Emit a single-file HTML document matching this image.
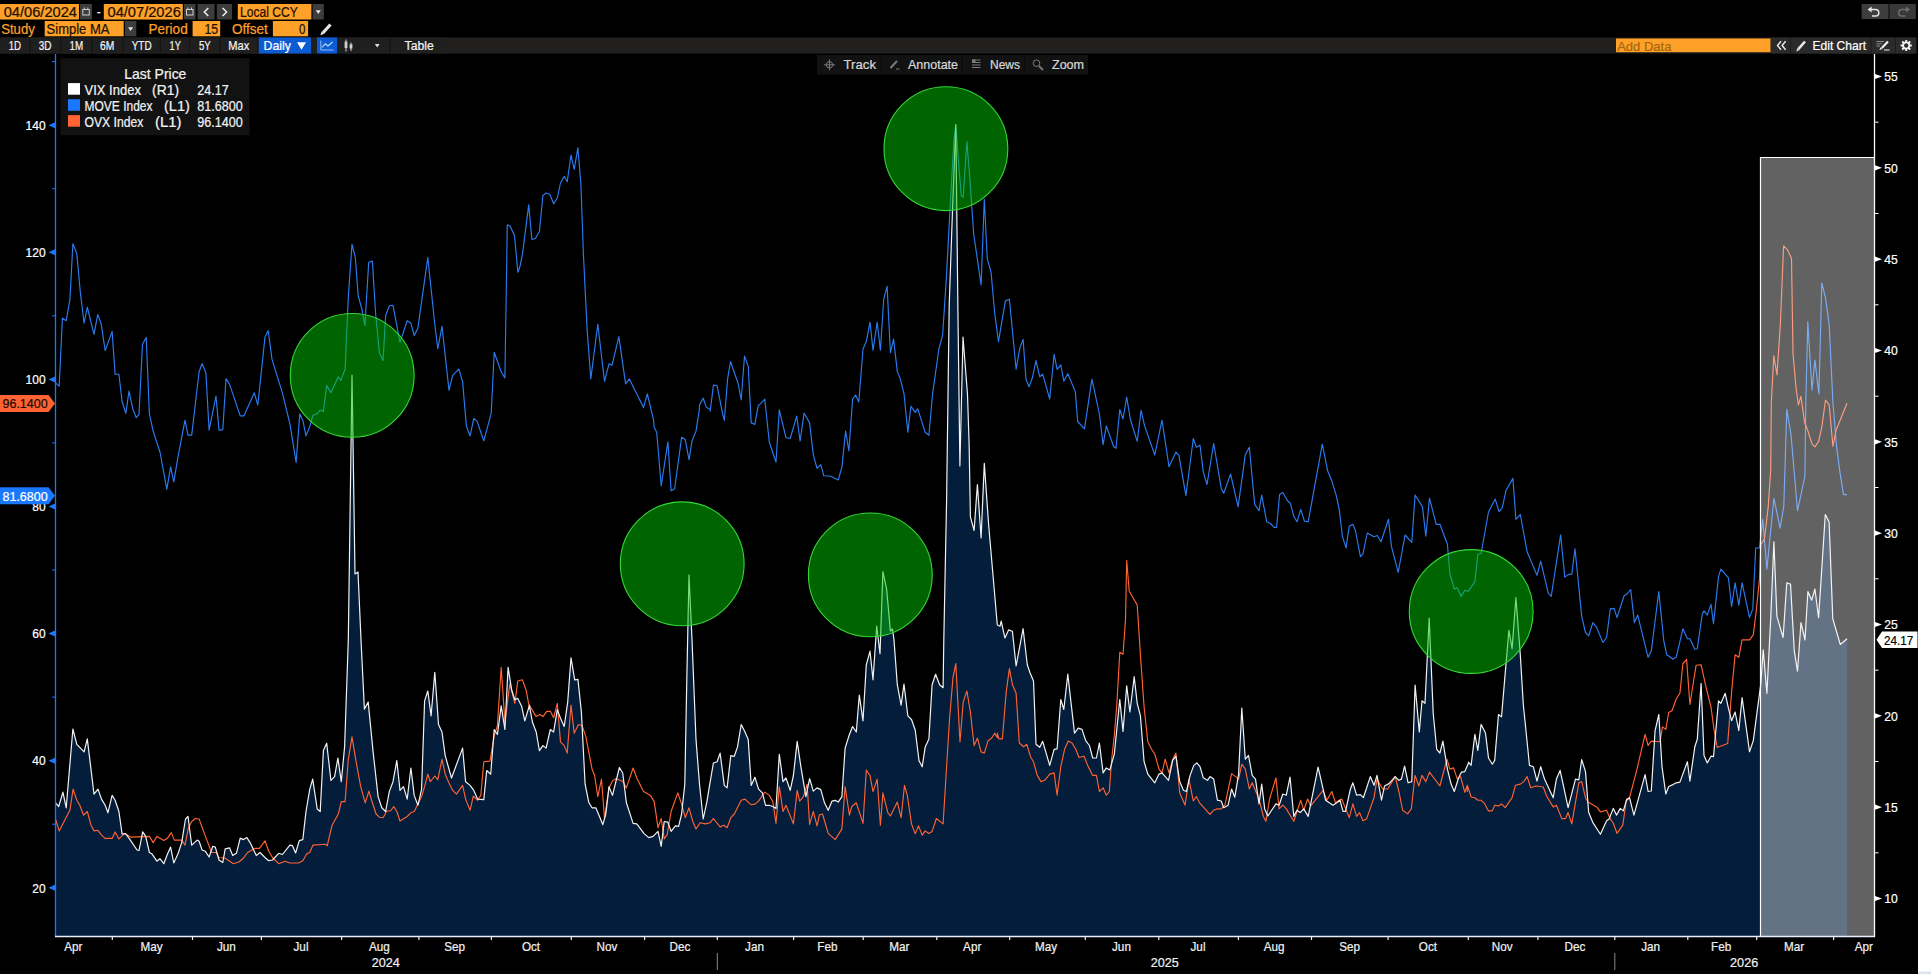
<!DOCTYPE html>
<html lang="en"><head><meta charset="utf-8"><title>Volatility Indices Chart</title>
<style>html,body{margin:0;padding:0;background:#000;}body{width:1931px;height:974px;overflow:hidden;position:relative}</style></head>
<body>
<svg width="1931" height="974" viewBox="0 0 1931 974" font-family="Liberation Sans, Arial, sans-serif" style="position:absolute;left:0;top:0;display:block">
<rect x="0.0" y="0.0" width="1931.0" height="974.0" fill="#000" />
<rect x="1918.0" y="0.0" width="13.0" height="974.0" fill="#fff" />
<rect x="1918.0" y="971.5" width="13.0" height="2.5" fill="#dde3ee" />
<path d="M55.5,802.8 L58.7,806.5 L62.9,792.1 L66.2,807.8 L72.9,729.0 L76.8,744.4 L84.1,751.9 L87.3,738.9 L94.0,794.1 L98.0,789.1 L101.5,799.1 L105.2,805.3 L107.9,812.8 L112.1,795.4 L115.1,800.3 L118.9,811.5 L122.1,833.9 L125.8,833.9 L129.5,838.9 L137.0,850.0 L139.0,850.5 L142.7,831.9 L145.7,836.4 L149.4,852.5 L151.9,853.8 L156.9,861.2 L159.9,858.7 L163.8,863.7 L167.6,853.8 L170.6,847.1 L173.8,863.0 L178.0,853.8 L181.7,842.6 L185.5,819.0 L188.0,816.5 L191.7,845.1 L197.2,840.1 L199.1,841.3 L202.1,850.0 L205.4,851.3 L209.1,857.0 L212.8,846.3 L215.3,847.1 L219.0,860.0 L222.8,862.5 L225.2,848.8 L229.5,847.8 L232.7,855.5 L236.4,853.3 L240.2,838.1 L243.4,839.6 L246.9,837.6 L250.1,842.6 L256.3,855.5 L260.0,852.5 L265.0,857.5 L268.7,860.7 L272.5,860.0 L278.7,853.3 L282.4,854.5 L289.9,845.1 L292.4,845.6 L295.6,853.0 L299.3,840.6 L302.8,839.6 L306.0,811.5 L309.8,789.1 L312.7,779.2 L317.2,809.0 L320.2,811.5 L323.4,750.6 L326.7,743.2 L330.9,780.4 L334.6,776.7 L337.9,758.1 L341.3,781.7 L344.6,746.9 L348.3,640.0 L352.0,375.0 L355.0,574.0 L358.0,572.0 L361.0,640.0 L364.4,709.1 L368.2,702.1 L373.1,751.9 L378.1,796.6 L381.8,807.8 L385.6,811.5 L389.3,791.6 L393.0,781.7 L396.8,760.6 L400.0,790.4 L403.5,786.7 L407.2,799.1 L410.9,768.0 L414.2,795.4 L417.9,805.3 L421.6,789.1 L424.6,700.9 L427.8,691.0 L431.1,715.8 L434.8,672.3 L438.5,724.5 L442.0,732.0 L445.2,755.6 L451.5,778.0 L462.6,748.1 L465.6,781.7 L470.1,785.4 L473.8,790.4 L477.6,799.1 L483.8,799.6 L486.7,770.5 L490.7,774.2 L494.2,729.5 L497.4,734.5 L501.2,705.9 L504.9,729.5 L508.1,667.3 L511.6,689.7 L514.8,699.7 L517.8,698.4 L521.5,705.9 L524.8,720.8 L529.3,705.9 L529.3,705.1 L532.4,722.0 L536.2,732.0 L539.4,750.6 L542.9,745.6 L546.1,748.1 L550.3,729.5 L553.6,732.0 L557.3,709.6 L560.5,718.3 L564.2,726.5 L567.7,702.1 L571.0,657.9 L574.7,679.8 L577.9,679.3 L581.4,712.1 L585.1,784.2 L588.9,802.8 L592.1,807.8 L595.8,807.8 L599.5,816.5 L602.8,824.7 L605.8,814.0 L609.0,786.7 L612.5,795.4 L619.4,767.5 L622.7,773.0 L626.4,802.8 L633.1,823.4 L636.8,823.9 L644.3,833.9 L648.8,837.6 L653.0,836.4 L658.0,831.4 L661.2,846.3 L664.2,821.5 L667.9,822.2 L671.1,831.4 L675.4,825.9 L678.6,826.4 L681.6,814.0 L684.8,784.2 L687.0,669.8 L689.0,575.0 L692.0,640.0 L696.0,739.4 L699.5,784.2 L703.2,819.0 L706.9,801.6 L710.2,781.7 L713.4,763.0 L717.1,761.8 L720.1,753.1 L724.3,785.4 L727.1,787.9 L730.8,755.6 L734.3,756.3 L737.5,746.9 L741.2,724.5 L745.0,732.0 L748.2,739.4 L751.2,785.4 L754.9,777.2 L758.6,789.1 L762.4,792.9 L765.6,805.3 L769.3,805.3 L772.8,806.5 L776.0,808.5 L779.3,754.3 L783.0,781.7 L786.0,778.0 L790.2,790.4 L793.4,775.5 L797.2,741.4 L800.9,766.8 L805.9,796.6 L809.6,778.7 L813.3,791.1 L817.0,787.9 L820.8,789.6 L824.5,802.8 L828.2,810.3 L832.0,801.1 L835.2,800.3 L838.2,802.1 L841.9,796.6 L845.1,748.1 L849.4,734.5 L852.6,726.5 L856.3,732.0 L859.3,695.2 L863.0,720.8 L866.3,664.9 L870.0,651.2 L873.0,679.8 L876.7,626.0 L880.0,653.7 L882.9,571.5 L886.6,589.0 L890.4,631.0 L892.5,629.0 L894.0,640.0 L897.3,684.7 L901.1,705.1 L904.0,684.2 L907.8,715.8 L911.5,719.5 L915.2,730.0 L919.0,760.6 L922.2,766.8 L925.2,746.9 L928.9,738.9 L932.1,684.7 L935.6,674.3 L939.6,684.7 L943.1,687.7 L943.8,640.0 L946.6,500.0 L949.2,305.0 L952.5,210.0 L955.8,124.8 L957.0,230.0 L957.9,310.0 L959.9,466.0 L963.0,337.0 L967.5,394.5 L969.1,443.7 L970.4,516.8 L974.1,530.5 L977.4,484.5 L981.1,538.0 L984.3,463.4 L988.6,524.3 L997.3,625.0 L1000.0,626.2 L1001.2,621.2 L1004.9,637.9 L1008.6,629.9 L1012.4,631.2 L1016.1,666.0 L1023.1,628.7 L1027.3,664.7 L1029.8,672.2 L1033.5,680.9 L1036.0,744.3 L1039.7,747.3 L1042.7,741.3 L1049.7,765.4 L1054.1,749.3 L1057.1,748.8 L1060.8,699.5 L1063.8,709.5 L1067.8,674.2 L1074.5,733.1 L1078.2,728.1 L1082.0,729.4 L1085.7,740.6 L1089.4,745.5 L1092.7,758.0 L1096.4,758.0 L1099.4,743.0 L1103.1,772.9 L1106.3,767.9 L1109.8,769.9 L1114.3,754.2 L1119.8,699.5 L1123.0,731.4 L1126.7,685.9 L1129.9,712.0 L1134.2,676.7 L1137.2,703.3 L1140.4,715.7 L1144.1,761.7 L1147.8,774.1 L1154.8,782.8 L1159.0,774.1 L1162.0,772.9 L1168.5,780.3 L1172.7,760.4 L1175.9,756.2 L1179.7,781.6 L1183.4,790.3 L1186.4,791.5 L1190.1,775.4 L1193.8,765.4 L1196.8,762.9 L1200.0,766.7 L1203.3,777.8 L1207.5,780.3 L1210.0,776.6 L1213.7,779.1 L1217.4,800.2 L1221.2,801.0 L1223.7,807.7 L1228.1,805.2 L1231.6,789.0 L1234.8,797.2 L1238.6,774.1 L1241.8,708.2 L1245.3,759.2 L1248.5,755.5 L1252.2,775.4 L1255.5,779.1 L1259.0,803.9 L1261.7,784.1 L1264.7,808.9 L1267.9,815.9 L1275.9,803.9 L1279.1,805.2 L1282.8,794.0 L1286.3,795.2 L1290.0,777.1 L1293.8,816.4 L1297.0,810.2 L1300.2,812.6 L1303.7,808.9 L1308.2,816.4 L1318.1,767.2 L1325.6,800.2 L1333.0,805.2 L1336.8,802.7 L1340.0,800.2 L1343.0,811.4 L1345.5,811.4 L1350.4,789.0 L1352.9,782.8 L1356.6,795.2 L1360.4,794.7 L1363.4,797.7 L1370.3,776.6 L1374.0,785.3 L1377.0,775.4 L1381.5,800.2 L1384.5,786.0 L1389.0,783.6 L1395.2,776.6 L1398.9,780.3 L1401.4,779.1 L1404.6,766.2 L1408.1,782.8 L1411.8,781.6 L1415.1,685.1 L1419.3,731.9 L1422.0,700.8 L1425.0,703.3 L1429.2,618.2 L1433.2,713.2 L1436.7,749.3 L1439.9,753.0 L1442.9,741.1 L1447.4,769.1 L1451.1,784.1 L1454.3,791.5 L1458.6,777.8 L1461.5,772.1 L1464.8,771.6 L1468.5,762.9 L1468.5,762.2 L1471.1,765.4 L1474.9,734.3 L1477.8,750.5 L1481.1,724.4 L1485.5,733.1 L1488.5,758.0 L1492.3,764.2 L1494.7,760.4 L1498.5,714.5 L1501.5,716.9 L1505.2,673.4 L1508.9,630.4 L1512.1,648.6 L1515.9,597.7 L1520.3,654.8 L1523.3,704.5 L1529.5,765.4 L1533.3,766.7 L1537.0,781.1 L1540.7,766.7 L1544.5,779.1 L1553.2,797.7 L1556.4,779.1 L1560.1,770.4 L1563.1,784.1 L1568.1,807.7 L1575.5,779.1 L1578.8,779.8 L1581.7,759.7 L1585.5,771.6 L1588.7,812.6 L1592.9,822.6 L1600.4,834.3 L1606.6,820.8 L1609.1,818.9 L1613.3,808.4 L1616.5,815.1 L1620.3,808.4 L1623.3,810.9 L1626.5,800.2 L1629.5,797.7 L1633.9,815.1 L1645.1,774.6 L1648.1,791.5 L1651.3,791.0 L1655.1,730.6 L1658.8,714.5 L1662.0,766.7 L1665.8,794.0 L1668.7,786.5 L1673.0,784.6 L1676.2,782.8 L1679.9,782.1 L1687.4,761.7 L1689.9,781.1 L1694.8,746.8 L1697.3,739.3 L1701.1,683.4 L1704.0,755.5 L1707.3,762.9 L1711.0,756.2 L1713.5,756.7 L1718.5,700.8 L1720.9,703.3 L1725.2,693.3 L1728.4,708.2 L1731.6,720.7 L1735.1,712.0 L1738.8,730.6 L1742.1,697.6 L1749.5,751.7 L1753.3,740.6 L1760.7,684.6 L1763.2,649.8 L1766.9,693.3 L1770.7,618.9 L1773.9,541.8 L1776.9,616.4 L1783.1,637.5 L1786.8,582.8 L1790.5,584.1 L1794.3,651.2 L1797.5,671.1 L1801.0,622.6 L1805.0,640.0 L1807.9,591.5 L1811.7,600.2 L1814.9,589.0 L1818.6,617.6 L1825.3,514.5 L1829.1,521.9 L1832.8,618.9 L1840.3,644.5 L1847.0,638.7 L1847.0,936 L55.5,936 Z" fill="#031d3b"/>
<path d="M55.5,382.9 L59.2,386.1 L62.4,318.2 L66.2,320.7 L69.9,299.6 L72.9,243.7 L76.8,253.6 L80.3,292.1 L84.1,323.2 L87.3,307.1 L94.0,334.4 L97.7,314.5 L101.0,323.2 L105.2,350.6 L112.1,331.4 L115.1,374.2 L118.9,374.2 L122.1,401.5 L125.8,413.4 L129.0,391.1 L132.8,409.0 L136.3,417.7 L139.0,414.4 L142.5,344.3 L146.2,337.4 L149.4,413.9 L153.2,431.3 L160.1,452.5 L166.8,489.3 L170.6,466.9 L173.8,481.8 L178.0,456.9 L185.0,420.2 L188.0,435.1 L191.7,435.1 L199.1,371.7 L202.1,363.5 L205.9,372.9 L209.1,430.1 L216.0,396.0 L219.0,430.1 L222.8,429.6 L226.0,378.6 L229.5,384.1 L240.2,415.9 L243.9,415.9 L254.3,392.8 L257.8,405.2 L265.0,336.9 L268.2,330.7 L272.0,359.3 L282.4,392.8 L289.9,423.9 L296.1,462.4 L299.8,413.9 L302.8,420.2 L306.0,435.8 L309.8,426.4 L313.0,415.2 L317.2,413.9 L320.2,410.2 L323.4,411.5 L326.7,385.4 L330.9,392.8 L338.3,376.7 L340.8,380.4 L345.1,369.2 L348.3,297.1 L352.0,244.4 L355.3,257.3 L358.2,295.9 L362.0,309.5 L364.9,325.7 L368.7,262.3 L372.4,261.1 L375.6,313.3 L379.4,353.0 L383.1,360.5 L385.6,315.8 L389.3,305.8 L393.0,305.3 L400.0,342.4 L407.2,320.7 L410.9,323.2 L414.2,335.6 L417.9,328.2 L427.8,257.3 L434.8,324.5 L437.8,348.6 L442.0,326.4 L449.0,390.3 L452.7,375.4 L458.9,369.2 L462.6,381.6 L466.4,426.4 L470.1,435.8 L473.8,418.4 L477.1,421.4 L483.8,440.8 L491.2,413.4 L494.2,352.3 L501.2,371.7 L504.9,377.9 L507.3,224.8 L510.2,226.3 L514.5,235.7 L517.9,272.2 L520.0,266.3 L522.5,253.9 L528.7,204.9 L531.9,239.5 L535.4,238.5 L539.4,231.5 L542.9,195.5 L546.1,193.0 L549.8,194.2 L553.6,203.7 L557.3,198.0 L560.5,183.0 L564.2,176.3 L567.2,181.8 L571.0,155.0 L574.2,169.4 L577.9,147.7 L580.9,184.3 L583.4,253.9 L587.1,329.1 L590.8,378.9 L597.8,324.2 L604.5,381.3 L609.0,363.9 L612.0,365.2 L618.9,336.6 L625.6,383.8 L629.4,378.9 L643.5,407.4 L647.3,393.8 L653.5,419.9 L654.2,427.3 L656.7,432.3 L661.2,485.8 L667.9,441.8 L671.1,490.7 L674.6,489.0 L681.6,437.3 L685.3,439.8 L689.0,459.7 L692.0,441.0 L696.0,431.1 L699.5,408.7 L699.5,405.0 L703.2,398.2 L706.4,407.4 L710.2,409.2 L710.2,411.2 L713.4,385.1 L717.1,385.8 L722.6,413.7 L724.3,420.4 L727.6,378.9 L730.5,361.5 L738.2,383.8 L741.2,400.0 L744.5,356.0 L748.2,366.4 L751.2,422.9 L754.9,424.4 L758.1,406.2 L764.8,399.2 L769.3,442.3 L776.0,462.1 L779.3,409.9 L786.0,437.8 L790.2,438.5 L796.7,416.1 L800.1,441.0 L804.1,413.2 L809.6,422.9 L813.3,454.7 L817.0,468.4 L820.8,464.6 L823.8,475.8 L830.7,476.3 L838.2,480.0 L841.9,467.1 L845.6,431.1 L848.9,451.0 L852.6,399.2 L855.6,395.0 L858.8,402.0 L863.0,349.0 L866.3,341.6 L870.0,322.2 L873.0,350.3 L877.2,322.2 L880.4,350.3 L883.7,299.3 L887.1,286.4 L890.4,352.8 L893.6,339.1 L897.3,371.4 L900.3,378.9 L904.0,393.8 L907.8,432.3 L911.0,406.2 L915.2,412.4 L917.7,408.7 L925.2,432.3 L928.9,435.3 L932.6,393.8 L938.9,349.0 L942.6,335.4 L946.3,279.4 L950.0,209.1 L953.8,142.0 L955.8,124.6 L958.7,164.4 L961.2,195.5 L963.2,197.2 L966.9,141.5 L969.9,179.3 L973.7,234.0 L981.1,285.0 L984.3,199.2 L987.3,258.9 L991.1,272.5 L994.8,314.2 L998.5,341.6 L998.5,341.4 L1005.4,300.9 L1009.4,299.2 L1016.1,369.3 L1019.8,348.1 L1023.1,339.4 L1026.0,379.2 L1029.0,386.7 L1032.3,378.0 L1036.0,360.6 L1039.7,376.7 L1042.7,374.2 L1049.7,399.1 L1054.1,354.3 L1057.1,369.3 L1060.8,365.0 L1063.8,381.2 L1067.8,373.7 L1075.3,391.6 L1077.7,421.5 L1084.5,428.9 L1091.9,379.2 L1099.4,414.0 L1103.1,444.6 L1106.3,425.9 L1113.5,446.3 L1116.0,448.3 L1119.8,409.5 L1123.0,419.0 L1126.7,397.1 L1130.4,419.5 L1137.2,441.3 L1141.1,410.3 L1144.6,425.9 L1154.8,455.0 L1162.0,420.2 L1169.0,466.7 L1175.9,452.2 L1178.9,455.2 L1185.9,495.7 L1193.3,438.5 L1196.3,447.2 L1200.0,445.2 L1203.3,472.1 L1207.0,484.5 L1213.7,443.5 L1221.2,488.2 L1223.7,493.2 L1230.6,474.1 L1238.1,506.9 L1245.3,454.7 L1249.3,447.2 L1254.7,504.4 L1259.0,510.6 L1261.7,495.0 L1266.7,521.8 L1270.4,523.5 L1274.1,527.3 L1276.6,527.3 L1279.6,494.5 L1282.8,492.5 L1287.5,500.7 L1290.3,503.2 L1293.8,516.3 L1297.0,521.8 L1300.7,509.4 L1304.4,521.1 L1308.2,521.8 L1322.3,444.2 L1327.6,470.8 L1331.8,480.8 L1336.3,495.7 L1339.2,509.4 L1342.5,536.7 L1346.0,547.9 L1349.2,526.3 L1352.9,524.3 L1355.4,530.5 L1360.4,556.6 L1362.9,554.1 L1367.3,533.0 L1374.0,536.7 L1377.3,535.5 L1381.0,541.7 L1388.5,519.3 L1391.5,546.7 L1398.2,572.3 L1405.1,535.0 L1411.8,542.4 L1415.1,495.0 L1422.5,506.9 L1425.8,536.2 L1429.5,498.2 L1436.2,524.3 L1439.9,524.3 L1447.4,544.2 L1449.9,574.0 L1454.3,588.9 L1457.3,587.7 L1461.1,596.4 L1464.8,590.2 L1468.5,591.4 L1468.5,591.0 L1474.9,581.6 L1477.8,554.2 L1481.1,553.5 L1488.5,512.0 L1495.2,499.0 L1499.0,511.5 L1502.2,508.2 L1505.9,490.8 L1512.9,478.4 L1515.9,519.4 L1520.3,514.5 L1527.1,551.7 L1537.0,575.4 L1540.7,561.2 L1548.2,592.8 L1551.2,596.5 L1560.6,534.8 L1564.8,577.1 L1568.1,574.6 L1571.8,574.1 L1575.0,548.8 L1581.7,616.4 L1585.5,632.5 L1588.7,635.8 L1592.9,622.6 L1596.7,627.6 L1602.9,642.5 L1606.6,637.5 L1610.3,608.9 L1614.1,608.4 L1617.0,617.6 L1624.0,596.0 L1627.0,594.0 L1630.7,589.5 L1634.4,622.6 L1637.7,615.1 L1648.1,657.3 L1651.3,651.1 L1658.8,591.5 L1663.8,641.2 L1666.8,654.9 L1668.7,656.0 L1673.0,659.3 L1676.2,657.3 L1682.9,628.8 L1687.4,638.7 L1689.9,638.7 L1694.8,649.2 L1697.3,648.7 L1702.3,613.9 L1704.0,610.9 L1707.3,615.1 L1711.0,604.4 L1713.5,623.8 L1718.5,576.6 L1720.9,569.1 L1728.4,577.8 L1731.6,606.4 L1735.1,582.8 L1738.8,605.2 L1742.1,582.8 L1749.5,617.6 L1752.8,608.9 L1755.7,548.0 L1759.5,548.0 L1762.7,519.4 L1766.9,569.1 L1773.9,498.3 L1780.1,528.1 L1783.8,505.8 L1786.8,409.4 L1791.0,434.5 L1797.5,510.7 L1804.9,476.5 L1805.8,402.5 L1807.8,321.7 L1812.0,390.2 L1814.9,360.1 L1818.9,393.9 L1821.8,283.0 L1825.5,297.8 L1829.2,324.9 L1832.9,402.5 L1836.6,446.8 L1840.3,474.7 L1843.5,494.6 L1847.0,494.6" fill="none" stroke="#2b7bf0" stroke-width="1.15" stroke-linejoin="round"/>
<path d="M55.5,819.0 L59.2,830.9 L69.9,810.3 L73.1,789.1 L76.8,800.3 L79.8,805.3 L83.6,815.2 L87.3,811.5 L91.0,825.2 L94.2,830.9 L97.7,830.2 L101.5,835.1 L105.2,838.4 L112.1,838.4 L115.1,831.9 L118.9,838.9 L124.6,833.4 L130.8,837.1 L149.4,836.4 L153.2,842.6 L156.9,836.4 L163.8,840.6 L167.6,838.1 L171.3,832.6 L174.3,840.1 L181.7,840.1 L185.0,845.1 L188.5,827.7 L191.7,821.5 L195.4,818.5 L199.1,819.0 L205.4,836.4 L211.6,852.5 L216.0,852.5 L219.0,857.5 L225.2,858.2 L233.4,863.7 L238.9,862.0 L243.4,858.2 L247.6,852.5 L255.1,848.3 L259.5,848.3 L265.0,840.8 L268.7,851.3 L272.5,857.5 L278.7,863.7 L284.9,861.2 L289.9,863.0 L298.6,863.0 L302.8,860.7 L306.8,853.8 L309.8,852.5 L313.0,845.1 L325.9,844.3 L327.2,845.8 L332.1,825.2 L338.3,814.0 L341.3,801.6 L345.1,801.6 L348.3,759.3 L352.0,736.9 L355.7,759.3 L360.7,786.7 L365.2,802.8 L368.9,791.1 L372.4,802.8 L376.1,814.0 L379.4,817.2 L383.1,817.7 L386.8,811.0 L390.5,811.0 L393.8,806.5 L396.8,811.5 L400.0,821.0 L407.2,816.5 L410.9,812.8 L414.2,811.5 L417.9,804.1 L421.6,796.6 L424.6,786.7 L427.8,774.2 L430.3,781.7 L434.8,776.0 L437.8,779.7 L442.0,759.3 L445.2,774.2 L449.0,782.9 L452.7,790.4 L456.4,794.1 L462.6,785.4 L465.6,799.1 L470.1,810.3 L473.3,796.1 L477.6,800.3 L480.8,795.4 L483.8,761.8 L490.0,761.1 L494.2,735.7 L497.4,725.8 L501.2,667.3 L504.9,722.0 L509.9,683.5 L514.8,703.4 L517.8,681.0 L522.3,679.8 L526.0,689.7 L529.3,707.1 L529.3,705.1 L536.2,716.6 L539.9,714.6 L542.9,716.6 L546.8,711.3 L550.3,711.3 L553.6,717.8 L557.3,703.4 L560.5,741.9 L564.2,745.6 L567.2,753.1 L571.0,705.1 L574.2,733.2 L578.4,724.5 L582.1,725.8 L585.9,736.9 L592.1,769.3 L594.6,775.5 L597.8,796.6 L601.5,779.2 L604.5,818.5 L609.0,787.9 L612.5,780.9 L615.7,778.7 L622.7,781.2 L626.4,787.9 L633.1,768.0 L636.8,778.0 L643.5,791.6 L650.5,795.4 L654.2,801.6 L658.0,827.7 L661.2,818.5 L664.2,838.9 L667.2,834.6 L671.1,811.5 L677.8,792.9 L681.6,804.1 L685.3,817.7 L689.0,807.8 L692.8,821.5 L696.0,828.9 L700.2,822.7 L705.2,823.9 L710.2,822.7 L713.4,818.5 L720.1,826.9 L723.8,825.2 L727.1,827.7 L730.8,817.7 L734.3,814.0 L741.2,800.3 L745.0,799.1 L751.2,804.8 L754.9,804.1 L758.6,801.1 L762.4,795.4 L764.8,792.1 L769.3,795.4 L772.8,801.6 L776.0,823.4 L779.3,786.7 L783.0,811.5 L786.0,805.3 L793.4,823.9 L797.2,790.4 L799.6,801.1 L803.4,796.6 L807.1,784.2 L809.6,824.4 L813.3,811.5 L817.0,825.9 L819.5,814.7 L822.5,814.0 L828.2,833.4 L835.2,839.6 L841.9,828.9 L845.1,786.7 L849.4,815.2 L851.8,806.5 L856.3,802.8 L863.0,823.4 L866.3,770.0 L870.0,775.5 L873.0,791.6 L877.2,779.2 L880.4,825.2 L882.9,792.9 L887.9,812.8 L890.4,816.0 L897.3,802.1 L901.1,817.7 L904.5,785.4 L907.3,795.4 L911.5,823.9 L915.2,833.9 L918.5,825.9 L922.2,835.1 L925.2,830.9 L928.9,833.4 L932.1,831.4 L936.4,818.5 L943.1,823.9 L946.3,771.7 L949.5,719.5 L953.0,677.3 L955.8,663.6 L960.0,741.9 L963.2,702.1 L966.9,691.0 L970.4,712.1 L974.1,745.6 L977.4,738.2 L981.1,751.9 L984.3,753.1 L988.1,740.7 L991.5,738.2 L994.8,733.2 L997.3,737.7 L997.3,733.1 L998.7,738.8 L1002.4,738.8 L1006.2,692.1 L1009.4,668.5 L1012.4,684.6 L1016.1,693.3 L1019.3,743.0 L1023.6,746.8 L1026.8,744.3 L1030.5,756.7 L1033.5,761.7 L1037.2,775.4 L1041.0,781.6 L1044.7,780.3 L1049.7,774.1 L1054.1,772.9 L1057.1,795.2 L1060.8,766.7 L1064.6,749.3 L1068.3,741.1 L1072.0,743.0 L1075.8,749.3 L1079.0,757.5 L1084.0,756.2 L1087.7,765.4 L1092.7,775.4 L1096.4,775.4 L1099.4,791.5 L1103.1,787.8 L1106.3,795.2 L1109.3,791.5 L1111.8,758.0 L1114.3,735.6 L1116.8,704.5 L1119.8,652.3 L1123.0,654.3 L1125.5,620.0 L1126.7,560.3 L1129.2,591.0 L1137.2,605.0 L1138.5,625.0 L1140.4,654.8 L1144.1,707.0 L1147.8,741.8 L1151.6,749.3 L1154.8,754.2 L1159.0,769.1 L1162.0,772.9 L1165.2,759.2 L1169.0,772.9 L1172.7,759.2 L1175.9,753.0 L1179.7,792.8 L1185.1,805.2 L1188.9,779.1 L1193.3,801.0 L1196.3,796.5 L1200.0,803.4 L1210.0,814.4 L1213.7,810.2 L1217.4,808.9 L1221.2,808.9 L1224.9,805.2 L1231.6,773.6 L1235.6,776.6 L1238.6,779.1 L1241.8,764.2 L1245.3,769.1 L1249.3,789.0 L1252.2,782.8 L1259.0,799.0 L1263.4,816.4 L1265.9,821.3 L1269.6,799.0 L1275.9,777.8 L1279.1,808.9 L1282.8,805.2 L1286.3,808.9 L1293.8,821.3 L1300.7,800.2 L1303.7,810.2 L1307.7,799.0 L1310.7,805.9 L1323.1,790.3 L1326.8,800.2 L1331.8,791.5 L1335.5,802.7 L1339.2,800.2 L1341.7,799.0 L1349.2,817.6 L1352.9,803.9 L1356.6,816.4 L1359.6,812.6 L1362.9,820.8 L1366.6,818.9 L1374.0,797.7 L1377.0,779.1 L1382.7,789.0 L1387.7,789.0 L1395.2,776.6 L1398.9,791.5 L1402.6,810.2 L1407.6,813.9 L1411.3,808.9 L1415.1,775.4 L1418.8,786.0 L1422.0,775.4 L1425.8,781.6 L1429.5,772.1 L1439.9,786.0 L1446.9,759.2 L1449.9,769.1 L1453.6,767.9 L1457.3,779.1 L1460.6,776.6 L1464.8,792.3 L1467.3,785.3 L1467.3,791.5 L1467.4,785.3 L1471.1,797.0 L1474.9,797.7 L1477.8,800.2 L1481.1,800.2 L1484.8,803.9 L1488.5,810.9 L1492.3,810.9 L1494.7,805.2 L1498.5,805.9 L1501.5,803.9 L1505.2,807.7 L1512.1,797.7 L1515.4,785.3 L1520.3,784.1 L1523.8,781.6 L1527.1,776.6 L1530.8,787.8 L1535.8,786.0 L1543.2,787.0 L1546.9,796.5 L1553.2,806.9 L1556.4,805.2 L1561.9,818.9 L1565.6,818.4 L1568.1,812.6 L1571.8,823.8 L1578.8,782.8 L1581.7,781.6 L1585.5,797.7 L1588.0,802.0 L1596.7,806.9 L1600.4,811.9 L1606.6,810.2 L1610.3,818.9 L1613.3,823.3 L1617.0,833.3 L1622.8,825.1 L1626.5,799.0 L1629.5,797.7 L1636.4,771.6 L1645.1,734.3 L1648.1,745.5 L1651.3,741.1 L1660.0,741.8 L1662.5,726.9 L1665.8,729.4 L1668.7,712.5 L1672.0,710.7 L1676.2,699.0 L1679.9,693.3 L1682.9,663.5 L1686.6,659.3 L1689.9,704.5 L1696.1,665.2 L1701.1,664.7 L1706.0,687.1 L1711.0,707.0 L1714.0,729.4 L1717.2,747.5 L1727.7,743.5 L1731.6,692.1 L1735.1,654.8 L1738.8,657.3 L1742.1,639.9 L1749.5,639.9 L1753.3,634.9 L1756.2,611.4 L1759.5,579.1 L1760.7,544.3 L1764.4,539.3 L1768.2,507.0 L1770.7,469.7 L1771.3,402.5 L1773.8,355.7 L1777.0,374.9 L1780.4,323.6 L1783.6,246.0 L1787.3,249.7 L1791.5,258.3 L1793.0,353.2 L1796.0,387.7 L1798.4,404.9 L1800.9,396.3 L1804.6,422.2 L1807.8,430.8 L1812.0,443.9 L1814.9,446.8 L1818.6,441.4 L1821.8,427.1 L1825.5,400.0 L1829.2,404.9 L1832.9,446.3 L1835.9,430.8 L1847.0,403.2" fill="none" stroke="#ff6334" stroke-width="1.15" stroke-linejoin="round"/>
<path d="M55.5,802.8 L58.7,806.5 L62.9,792.1 L66.2,807.8 L72.9,729.0 L76.8,744.4 L84.1,751.9 L87.3,738.9 L94.0,794.1 L98.0,789.1 L101.5,799.1 L105.2,805.3 L107.9,812.8 L112.1,795.4 L115.1,800.3 L118.9,811.5 L122.1,833.9 L125.8,833.9 L129.5,838.9 L137.0,850.0 L139.0,850.5 L142.7,831.9 L145.7,836.4 L149.4,852.5 L151.9,853.8 L156.9,861.2 L159.9,858.7 L163.8,863.7 L167.6,853.8 L170.6,847.1 L173.8,863.0 L178.0,853.8 L181.7,842.6 L185.5,819.0 L188.0,816.5 L191.7,845.1 L197.2,840.1 L199.1,841.3 L202.1,850.0 L205.4,851.3 L209.1,857.0 L212.8,846.3 L215.3,847.1 L219.0,860.0 L222.8,862.5 L225.2,848.8 L229.5,847.8 L232.7,855.5 L236.4,853.3 L240.2,838.1 L243.4,839.6 L246.9,837.6 L250.1,842.6 L256.3,855.5 L260.0,852.5 L265.0,857.5 L268.7,860.7 L272.5,860.0 L278.7,853.3 L282.4,854.5 L289.9,845.1 L292.4,845.6 L295.6,853.0 L299.3,840.6 L302.8,839.6 L306.0,811.5 L309.8,789.1 L312.7,779.2 L317.2,809.0 L320.2,811.5 L323.4,750.6 L326.7,743.2 L330.9,780.4 L334.6,776.7 L337.9,758.1 L341.3,781.7 L344.6,746.9 L348.3,640.0 L352.0,375.0 L355.0,574.0 L358.0,572.0 L361.0,640.0 L364.4,709.1 L368.2,702.1 L373.1,751.9 L378.1,796.6 L381.8,807.8 L385.6,811.5 L389.3,791.6 L393.0,781.7 L396.8,760.6 L400.0,790.4 L403.5,786.7 L407.2,799.1 L410.9,768.0 L414.2,795.4 L417.9,805.3 L421.6,789.1 L424.6,700.9 L427.8,691.0 L431.1,715.8 L434.8,672.3 L438.5,724.5 L442.0,732.0 L445.2,755.6 L451.5,778.0 L462.6,748.1 L465.6,781.7 L470.1,785.4 L473.8,790.4 L477.6,799.1 L483.8,799.6 L486.7,770.5 L490.7,774.2 L494.2,729.5 L497.4,734.5 L501.2,705.9 L504.9,729.5 L508.1,667.3 L511.6,689.7 L514.8,699.7 L517.8,698.4 L521.5,705.9 L524.8,720.8 L529.3,705.9 L529.3,705.1 L532.4,722.0 L536.2,732.0 L539.4,750.6 L542.9,745.6 L546.1,748.1 L550.3,729.5 L553.6,732.0 L557.3,709.6 L560.5,718.3 L564.2,726.5 L567.7,702.1 L571.0,657.9 L574.7,679.8 L577.9,679.3 L581.4,712.1 L585.1,784.2 L588.9,802.8 L592.1,807.8 L595.8,807.8 L599.5,816.5 L602.8,824.7 L605.8,814.0 L609.0,786.7 L612.5,795.4 L619.4,767.5 L622.7,773.0 L626.4,802.8 L633.1,823.4 L636.8,823.9 L644.3,833.9 L648.8,837.6 L653.0,836.4 L658.0,831.4 L661.2,846.3 L664.2,821.5 L667.9,822.2 L671.1,831.4 L675.4,825.9 L678.6,826.4 L681.6,814.0 L684.8,784.2 L687.0,669.8 L689.0,575.0 L692.0,640.0 L696.0,739.4 L699.5,784.2 L703.2,819.0 L706.9,801.6 L710.2,781.7 L713.4,763.0 L717.1,761.8 L720.1,753.1 L724.3,785.4 L727.1,787.9 L730.8,755.6 L734.3,756.3 L737.5,746.9 L741.2,724.5 L745.0,732.0 L748.2,739.4 L751.2,785.4 L754.9,777.2 L758.6,789.1 L762.4,792.9 L765.6,805.3 L769.3,805.3 L772.8,806.5 L776.0,808.5 L779.3,754.3 L783.0,781.7 L786.0,778.0 L790.2,790.4 L793.4,775.5 L797.2,741.4 L800.9,766.8 L805.9,796.6 L809.6,778.7 L813.3,791.1 L817.0,787.9 L820.8,789.6 L824.5,802.8 L828.2,810.3 L832.0,801.1 L835.2,800.3 L838.2,802.1 L841.9,796.6 L845.1,748.1 L849.4,734.5 L852.6,726.5 L856.3,732.0 L859.3,695.2 L863.0,720.8 L866.3,664.9 L870.0,651.2 L873.0,679.8 L876.7,626.0 L880.0,653.7 L882.9,571.5 L886.6,589.0 L890.4,631.0 L892.5,629.0 L894.0,640.0 L897.3,684.7 L901.1,705.1 L904.0,684.2 L907.8,715.8 L911.5,719.5 L915.2,730.0 L919.0,760.6 L922.2,766.8 L925.2,746.9 L928.9,738.9 L932.1,684.7 L935.6,674.3 L939.6,684.7 L943.1,687.7 L943.8,640.0 L946.6,500.0 L949.2,305.0 L952.5,210.0 L955.8,124.8 L957.0,230.0 L957.9,310.0 L959.9,466.0 L963.0,337.0 L967.5,394.5 L969.1,443.7 L970.4,516.8 L974.1,530.5 L977.4,484.5 L981.1,538.0 L984.3,463.4 L988.6,524.3 L997.3,625.0 L1000.0,626.2 L1001.2,621.2 L1004.9,637.9 L1008.6,629.9 L1012.4,631.2 L1016.1,666.0 L1023.1,628.7 L1027.3,664.7 L1029.8,672.2 L1033.5,680.9 L1036.0,744.3 L1039.7,747.3 L1042.7,741.3 L1049.7,765.4 L1054.1,749.3 L1057.1,748.8 L1060.8,699.5 L1063.8,709.5 L1067.8,674.2 L1074.5,733.1 L1078.2,728.1 L1082.0,729.4 L1085.7,740.6 L1089.4,745.5 L1092.7,758.0 L1096.4,758.0 L1099.4,743.0 L1103.1,772.9 L1106.3,767.9 L1109.8,769.9 L1114.3,754.2 L1119.8,699.5 L1123.0,731.4 L1126.7,685.9 L1129.9,712.0 L1134.2,676.7 L1137.2,703.3 L1140.4,715.7 L1144.1,761.7 L1147.8,774.1 L1154.8,782.8 L1159.0,774.1 L1162.0,772.9 L1168.5,780.3 L1172.7,760.4 L1175.9,756.2 L1179.7,781.6 L1183.4,790.3 L1186.4,791.5 L1190.1,775.4 L1193.8,765.4 L1196.8,762.9 L1200.0,766.7 L1203.3,777.8 L1207.5,780.3 L1210.0,776.6 L1213.7,779.1 L1217.4,800.2 L1221.2,801.0 L1223.7,807.7 L1228.1,805.2 L1231.6,789.0 L1234.8,797.2 L1238.6,774.1 L1241.8,708.2 L1245.3,759.2 L1248.5,755.5 L1252.2,775.4 L1255.5,779.1 L1259.0,803.9 L1261.7,784.1 L1264.7,808.9 L1267.9,815.9 L1275.9,803.9 L1279.1,805.2 L1282.8,794.0 L1286.3,795.2 L1290.0,777.1 L1293.8,816.4 L1297.0,810.2 L1300.2,812.6 L1303.7,808.9 L1308.2,816.4 L1318.1,767.2 L1325.6,800.2 L1333.0,805.2 L1336.8,802.7 L1340.0,800.2 L1343.0,811.4 L1345.5,811.4 L1350.4,789.0 L1352.9,782.8 L1356.6,795.2 L1360.4,794.7 L1363.4,797.7 L1370.3,776.6 L1374.0,785.3 L1377.0,775.4 L1381.5,800.2 L1384.5,786.0 L1389.0,783.6 L1395.2,776.6 L1398.9,780.3 L1401.4,779.1 L1404.6,766.2 L1408.1,782.8 L1411.8,781.6 L1415.1,685.1 L1419.3,731.9 L1422.0,700.8 L1425.0,703.3 L1429.2,618.2 L1433.2,713.2 L1436.7,749.3 L1439.9,753.0 L1442.9,741.1 L1447.4,769.1 L1451.1,784.1 L1454.3,791.5 L1458.6,777.8 L1461.5,772.1 L1464.8,771.6 L1468.5,762.9 L1468.5,762.2 L1471.1,765.4 L1474.9,734.3 L1477.8,750.5 L1481.1,724.4 L1485.5,733.1 L1488.5,758.0 L1492.3,764.2 L1494.7,760.4 L1498.5,714.5 L1501.5,716.9 L1505.2,673.4 L1508.9,630.4 L1512.1,648.6 L1515.9,597.7 L1520.3,654.8 L1523.3,704.5 L1529.5,765.4 L1533.3,766.7 L1537.0,781.1 L1540.7,766.7 L1544.5,779.1 L1553.2,797.7 L1556.4,779.1 L1560.1,770.4 L1563.1,784.1 L1568.1,807.7 L1575.5,779.1 L1578.8,779.8 L1581.7,759.7 L1585.5,771.6 L1588.7,812.6 L1592.9,822.6 L1600.4,834.3 L1606.6,820.8 L1609.1,818.9 L1613.3,808.4 L1616.5,815.1 L1620.3,808.4 L1623.3,810.9 L1626.5,800.2 L1629.5,797.7 L1633.9,815.1 L1645.1,774.6 L1648.1,791.5 L1651.3,791.0 L1655.1,730.6 L1658.8,714.5 L1662.0,766.7 L1665.8,794.0 L1668.7,786.5 L1673.0,784.6 L1676.2,782.8 L1679.9,782.1 L1687.4,761.7 L1689.9,781.1 L1694.8,746.8 L1697.3,739.3 L1701.1,683.4 L1704.0,755.5 L1707.3,762.9 L1711.0,756.2 L1713.5,756.7 L1718.5,700.8 L1720.9,703.3 L1725.2,693.3 L1728.4,708.2 L1731.6,720.7 L1735.1,712.0 L1738.8,730.6 L1742.1,697.6 L1749.5,751.7 L1753.3,740.6 L1760.7,684.6 L1763.2,649.8 L1766.9,693.3 L1770.7,618.9 L1773.9,541.8 L1776.9,616.4 L1783.1,637.5 L1786.8,582.8 L1790.5,584.1 L1794.3,651.2 L1797.5,671.1 L1801.0,622.6 L1805.0,640.0 L1807.9,591.5 L1811.7,600.2 L1814.9,589.0 L1818.6,617.6 L1825.3,514.5 L1829.1,521.9 L1832.8,618.9 L1840.3,644.5 L1847.0,638.7" fill="none" stroke="#f2f2f2" stroke-width="1.2" stroke-linejoin="round"/>
<circle cx="352.2" cy="375.4" r="61.9" fill="rgba(0,200,0,0.5)" stroke="#34d834" stroke-width="1.1"/>
<circle cx="682.2" cy="563.8" r="61.9" fill="rgba(0,200,0,0.5)" stroke="#34d834" stroke-width="1.1"/>
<circle cx="870.3" cy="574.9" r="61.9" fill="rgba(0,200,0,0.5)" stroke="#34d834" stroke-width="1.1"/>
<circle cx="945.9" cy="148.7" r="61.9" fill="rgba(0,200,0,0.5)" stroke="#34d834" stroke-width="1.1"/>
<circle cx="1471.2" cy="611.5" r="61.9" fill="rgba(0,200,0,0.5)" stroke="#34d834" stroke-width="1.1"/>
<rect x="1760.5" y="157.5" width="113.5" height="778.5" fill="rgba(245,245,245,0.4)" />
<path d="M1760.5,936 V157.5 H1874" fill="none" stroke="#fff" stroke-width="1.2"/>
<path d="M55.5,54 V936" stroke="#1e78ff" stroke-width="1.3" fill="none"/>
<path d="M55,936.5 H1875" stroke="#e8eefc" stroke-width="1.3" fill="none"/>
<path d="M1874.5,54 V937" stroke="#fff" stroke-width="1.3" fill="none"/>
<path d="M55,884.8 L48.5,887.8 L55,890.8 Z" fill="#1e78ff"/>
<text x="32.3" y="892.5" font-size="13" fill="#fff" textLength="13.3" lengthAdjust="spacingAndGlyphs" xml:space="preserve" stroke="#fff" stroke-width="0.22" >20</text>
<path d="M52,824.2 H55" stroke="#1e78ff" stroke-width="1"/>
<path d="M55,757.7 L48.5,760.7 L55,763.7 Z" fill="#1e78ff"/>
<text x="32.3" y="765.4" font-size="13" fill="#fff" textLength="13.3" lengthAdjust="spacingAndGlyphs" xml:space="preserve" stroke="#fff" stroke-width="0.22" >40</text>
<path d="M52,697.1 H55" stroke="#1e78ff" stroke-width="1"/>
<path d="M55,630.6 L48.5,633.6 L55,636.6 Z" fill="#1e78ff"/>
<text x="32.3" y="638.3" font-size="13" fill="#fff" textLength="13.3" lengthAdjust="spacingAndGlyphs" xml:space="preserve" stroke="#fff" stroke-width="0.22" >60</text>
<path d="M52,570.0 H55" stroke="#1e78ff" stroke-width="1"/>
<path d="M55,503.5 L48.5,506.5 L55,509.5 Z" fill="#1e78ff"/>
<text x="32.3" y="511.2" font-size="13" fill="#fff" textLength="13.3" lengthAdjust="spacingAndGlyphs" xml:space="preserve" stroke="#fff" stroke-width="0.22" >80</text>
<path d="M52,442.9 H55" stroke="#1e78ff" stroke-width="1"/>
<path d="M55,376.4 L48.5,379.4 L55,382.4 Z" fill="#1e78ff"/>
<text x="25.6" y="384.1" font-size="13" fill="#fff" textLength="20.0" lengthAdjust="spacingAndGlyphs" xml:space="preserve" stroke="#fff" stroke-width="0.22" >100</text>
<path d="M52,315.8 H55" stroke="#1e78ff" stroke-width="1"/>
<path d="M55,249.3 L48.5,252.3 L55,255.3 Z" fill="#1e78ff"/>
<text x="25.6" y="257.0" font-size="13" fill="#fff" textLength="20.0" lengthAdjust="spacingAndGlyphs" xml:space="preserve" stroke="#fff" stroke-width="0.22" >120</text>
<path d="M52,188.7 H55" stroke="#1e78ff" stroke-width="1"/>
<path d="M55,122.2 L48.5,125.2 L55,128.2 Z" fill="#1e78ff"/>
<text x="25.6" y="129.9" font-size="13" fill="#fff" textLength="20.0" lengthAdjust="spacingAndGlyphs" xml:space="preserve" stroke="#fff" stroke-width="0.22" >140</text>
<path d="M52,61.6 H55" stroke="#1e78ff" stroke-width="1"/>
<path d="M1875,895.9 L1882,898.5 L1875,901.1 Z" fill="#fff"/>
<text x="1884.2" y="903.3" font-size="13" fill="#fff" textLength="13.5" lengthAdjust="spacingAndGlyphs" xml:space="preserve" stroke="#fff" stroke-width="0.22" >10</text>
<path d="M1875,852.8 H1878.5" stroke="#fff" stroke-width="1"/>
<path d="M1875,804.6 L1882,807.2 L1875,809.8 Z" fill="#fff"/>
<text x="1884.2" y="812.0" font-size="13" fill="#fff" textLength="13.5" lengthAdjust="spacingAndGlyphs" xml:space="preserve" stroke="#fff" stroke-width="0.22" >15</text>
<path d="M1875,761.5 H1878.5" stroke="#fff" stroke-width="1"/>
<path d="M1875,713.2 L1882,715.8 L1875,718.4 Z" fill="#fff"/>
<text x="1884.2" y="720.6" font-size="13" fill="#fff" textLength="13.5" lengthAdjust="spacingAndGlyphs" xml:space="preserve" stroke="#fff" stroke-width="0.22" >20</text>
<path d="M1875,670.2 H1878.5" stroke="#fff" stroke-width="1"/>
<path d="M1875,621.9 L1882,624.5 L1875,627.1 Z" fill="#fff"/>
<text x="1884.2" y="629.3" font-size="13" fill="#fff" textLength="13.5" lengthAdjust="spacingAndGlyphs" xml:space="preserve" stroke="#fff" stroke-width="0.22" >25</text>
<path d="M1875,578.8 H1878.5" stroke="#fff" stroke-width="1"/>
<path d="M1875,530.6 L1882,533.2 L1875,535.8 Z" fill="#fff"/>
<text x="1884.2" y="538.0" font-size="13" fill="#fff" textLength="13.5" lengthAdjust="spacingAndGlyphs" xml:space="preserve" stroke="#fff" stroke-width="0.22" >30</text>
<path d="M1875,487.5 H1878.5" stroke="#fff" stroke-width="1"/>
<path d="M1875,439.2 L1882,441.8 L1875,444.4 Z" fill="#fff"/>
<text x="1884.2" y="446.6" font-size="13" fill="#fff" textLength="13.5" lengthAdjust="spacingAndGlyphs" xml:space="preserve" stroke="#fff" stroke-width="0.22" >35</text>
<path d="M1875,396.2 H1878.5" stroke="#fff" stroke-width="1"/>
<path d="M1875,347.9 L1882,350.5 L1875,353.1 Z" fill="#fff"/>
<text x="1884.2" y="355.3" font-size="13" fill="#fff" textLength="13.5" lengthAdjust="spacingAndGlyphs" xml:space="preserve" stroke="#fff" stroke-width="0.22" >40</text>
<path d="M1875,304.8 H1878.5" stroke="#fff" stroke-width="1"/>
<path d="M1875,256.6 L1882,259.2 L1875,261.8 Z" fill="#fff"/>
<text x="1884.2" y="264.0" font-size="13" fill="#fff" textLength="13.5" lengthAdjust="spacingAndGlyphs" xml:space="preserve" stroke="#fff" stroke-width="0.22" >45</text>
<path d="M1875,213.5 H1878.5" stroke="#fff" stroke-width="1"/>
<path d="M1875,165.2 L1882,167.8 L1875,170.4 Z" fill="#fff"/>
<text x="1884.2" y="172.6" font-size="13" fill="#fff" textLength="13.5" lengthAdjust="spacingAndGlyphs" xml:space="preserve" stroke="#fff" stroke-width="0.22" >50</text>
<path d="M1875,122.2 H1878.5" stroke="#fff" stroke-width="1"/>
<path d="M1875,73.9 L1882,76.5 L1875,79.1 Z" fill="#fff"/>
<text x="1884.2" y="81.3" font-size="13" fill="#fff" textLength="13.5" lengthAdjust="spacingAndGlyphs" xml:space="preserve" stroke="#fff" stroke-width="0.22" >55</text>
<path d="M0,395 H48.5 L55,403.5 L48.5,412 H0 Z" fill="#ff6334"/>
<text x="2.5" y="408.2" font-size="13" fill="#1a0a00" textLength="45.1" lengthAdjust="spacingAndGlyphs" xml:space="preserve" stroke="#1a0a00" stroke-width="0.22" >96.1400</text>
<path d="M0,487.3 H48.5 L55,495.8 L48.5,504.3 H0 Z" fill="#1a78ff"/>
<text x="2.5" y="500.5" font-size="13" fill="#fff" textLength="45.1" lengthAdjust="spacingAndGlyphs" xml:space="preserve" stroke="#fff" stroke-width="0.22" >81.6800</text>
<path d="M1876.5,639.7 L1882,631.5 H1917.5 V648 H1882 Z" fill="#fff"/>
<text x="1884.0" y="644.5" font-size="13" fill="#000" textLength="29.2" lengthAdjust="spacingAndGlyphs" xml:space="preserve" stroke="#000" stroke-width="0.22" >24.17</text>
<path d="M112.3,936 V940" stroke="#e8eefc" stroke-width="1.2"/>
<path d="M192.5,936 V940" stroke="#e8eefc" stroke-width="1.2"/>
<path d="M261.4,936 V940" stroke="#e8eefc" stroke-width="1.2"/>
<path d="M341.6,936 V940" stroke="#e8eefc" stroke-width="1.2"/>
<path d="M418.9,936 V940" stroke="#e8eefc" stroke-width="1.2"/>
<path d="M491.4,936 V940" stroke="#e8eefc" stroke-width="1.2"/>
<path d="M571.3,936 V940" stroke="#e8eefc" stroke-width="1.2"/>
<path d="M644.6,936 V940" stroke="#e8eefc" stroke-width="1.2"/>
<path d="M717.3,936 V940" stroke="#e8eefc" stroke-width="1.2"/>
<path d="M793.6,936 V940" stroke="#e8eefc" stroke-width="1.2"/>
<path d="M863.2,936 V940" stroke="#e8eefc" stroke-width="1.2"/>
<path d="M936.8,936 V940" stroke="#e8eefc" stroke-width="1.2"/>
<path d="M1009.7,936 V940" stroke="#e8eefc" stroke-width="1.2"/>
<path d="M1085.3,936 V940" stroke="#e8eefc" stroke-width="1.2"/>
<path d="M1158.8,936 V940" stroke="#e8eefc" stroke-width="1.2"/>
<path d="M1238.4,936 V940" stroke="#e8eefc" stroke-width="1.2"/>
<path d="M1311.5,936 V940" stroke="#e8eefc" stroke-width="1.2"/>
<path d="M1388.1,936 V940" stroke="#e8eefc" stroke-width="1.2"/>
<path d="M1468.3,936 V940" stroke="#e8eefc" stroke-width="1.2"/>
<path d="M1537.9,936 V940" stroke="#e8eefc" stroke-width="1.2"/>
<path d="M1614.8,936 V940" stroke="#e8eefc" stroke-width="1.2"/>
<path d="M1687.8,936 V940" stroke="#e8eefc" stroke-width="1.2"/>
<path d="M1756.7,936 V940" stroke="#e8eefc" stroke-width="1.2"/>
<path d="M1833.6,936 V940" stroke="#e8eefc" stroke-width="1.2"/>
<text x="64.2" y="950.5" font-size="13" fill="#f0f0f0" textLength="18.2" lengthAdjust="spacingAndGlyphs" xml:space="preserve" stroke="#f0f0f0" stroke-width="0.22" >Apr</text>
<text x="140.4" y="950.5" font-size="13" fill="#f0f0f0" textLength="22.1" lengthAdjust="spacingAndGlyphs" xml:space="preserve" stroke="#f0f0f0" stroke-width="0.22" >May</text>
<text x="216.9" y="950.5" font-size="13" fill="#f0f0f0" textLength="18.9" lengthAdjust="spacingAndGlyphs" xml:space="preserve" stroke="#f0f0f0" stroke-width="0.22" >Jun</text>
<text x="293.5" y="950.5" font-size="13" fill="#f0f0f0" textLength="15.0" lengthAdjust="spacingAndGlyphs" xml:space="preserve" stroke="#f0f0f0" stroke-width="0.22" >Jul</text>
<text x="368.9" y="950.5" font-size="13" fill="#f0f0f0" textLength="20.8" lengthAdjust="spacingAndGlyphs" xml:space="preserve" stroke="#f0f0f0" stroke-width="0.22" >Aug</text>
<text x="444.3" y="950.5" font-size="13" fill="#f0f0f0" textLength="20.8" lengthAdjust="spacingAndGlyphs" xml:space="preserve" stroke="#f0f0f0" stroke-width="0.22" >Sep</text>
<text x="521.9" y="950.5" font-size="13" fill="#f0f0f0" textLength="18.2" lengthAdjust="spacingAndGlyphs" xml:space="preserve" stroke="#f0f0f0" stroke-width="0.22" >Oct</text>
<text x="596.6" y="950.5" font-size="13" fill="#f0f0f0" textLength="20.8" lengthAdjust="spacingAndGlyphs" xml:space="preserve" stroke="#f0f0f0" stroke-width="0.22" >Nov</text>
<text x="669.6" y="950.5" font-size="13" fill="#f0f0f0" textLength="20.8" lengthAdjust="spacingAndGlyphs" xml:space="preserve" stroke="#f0f0f0" stroke-width="0.22" >Dec</text>
<text x="745.1" y="950.5" font-size="13" fill="#f0f0f0" textLength="18.9" lengthAdjust="spacingAndGlyphs" xml:space="preserve" stroke="#f0f0f0" stroke-width="0.22" >Jan</text>
<text x="817.3" y="950.5" font-size="13" fill="#f0f0f0" textLength="20.2" lengthAdjust="spacingAndGlyphs" xml:space="preserve" stroke="#f0f0f0" stroke-width="0.22" >Feb</text>
<text x="889.2" y="950.5" font-size="13" fill="#f0f0f0" textLength="20.2" lengthAdjust="spacingAndGlyphs" xml:space="preserve" stroke="#f0f0f0" stroke-width="0.22" >Mar</text>
<text x="963.1" y="950.5" font-size="13" fill="#f0f0f0" textLength="18.2" lengthAdjust="spacingAndGlyphs" xml:space="preserve" stroke="#f0f0f0" stroke-width="0.22" >Apr</text>
<text x="1034.9" y="950.5" font-size="13" fill="#f0f0f0" textLength="22.1" lengthAdjust="spacingAndGlyphs" xml:space="preserve" stroke="#f0f0f0" stroke-width="0.22" >May</text>
<text x="1112.0" y="950.5" font-size="13" fill="#f0f0f0" textLength="18.9" lengthAdjust="spacingAndGlyphs" xml:space="preserve" stroke="#f0f0f0" stroke-width="0.22" >Jun</text>
<text x="1190.5" y="950.5" font-size="13" fill="#f0f0f0" textLength="15.0" lengthAdjust="spacingAndGlyphs" xml:space="preserve" stroke="#f0f0f0" stroke-width="0.22" >Jul</text>
<text x="1263.8" y="950.5" font-size="13" fill="#f0f0f0" textLength="20.8" lengthAdjust="spacingAndGlyphs" xml:space="preserve" stroke="#f0f0f0" stroke-width="0.22" >Aug</text>
<text x="1339.3" y="950.5" font-size="13" fill="#f0f0f0" textLength="20.8" lengthAdjust="spacingAndGlyphs" xml:space="preserve" stroke="#f0f0f0" stroke-width="0.22" >Sep</text>
<text x="1418.8" y="950.5" font-size="13" fill="#f0f0f0" textLength="18.2" lengthAdjust="spacingAndGlyphs" xml:space="preserve" stroke="#f0f0f0" stroke-width="0.22" >Oct</text>
<text x="1491.7" y="950.5" font-size="13" fill="#f0f0f0" textLength="20.8" lengthAdjust="spacingAndGlyphs" xml:space="preserve" stroke="#f0f0f0" stroke-width="0.22" >Nov</text>
<text x="1564.6" y="950.5" font-size="13" fill="#f0f0f0" textLength="20.8" lengthAdjust="spacingAndGlyphs" xml:space="preserve" stroke="#f0f0f0" stroke-width="0.22" >Dec</text>
<text x="1641.2" y="950.5" font-size="13" fill="#f0f0f0" textLength="18.9" lengthAdjust="spacingAndGlyphs" xml:space="preserve" stroke="#f0f0f0" stroke-width="0.22" >Jan</text>
<text x="1711.1" y="950.5" font-size="13" fill="#f0f0f0" textLength="20.2" lengthAdjust="spacingAndGlyphs" xml:space="preserve" stroke="#f0f0f0" stroke-width="0.22" >Feb</text>
<text x="1784.0" y="950.5" font-size="13" fill="#f0f0f0" textLength="20.2" lengthAdjust="spacingAndGlyphs" xml:space="preserve" stroke="#f0f0f0" stroke-width="0.22" >Mar</text>
<text x="1854.7" y="950.5" font-size="13" fill="#f0f0f0" textLength="18.2" lengthAdjust="spacingAndGlyphs" xml:space="preserve" stroke="#f0f0f0" stroke-width="0.22" >Apr</text>
<text x="371.7" y="967.0" font-size="13" fill="#f0f0f0" textLength="28.1" lengthAdjust="spacingAndGlyphs" xml:space="preserve" stroke="#f0f0f0" stroke-width="0.22" >2024</text>
<text x="1150.8" y="967.0" font-size="13" fill="#f0f0f0" textLength="28.1" lengthAdjust="spacingAndGlyphs" xml:space="preserve" stroke="#f0f0f0" stroke-width="0.22" >2025</text>
<text x="1730.1" y="967.0" font-size="13" fill="#f0f0f0" textLength="28.1" lengthAdjust="spacingAndGlyphs" xml:space="preserve" stroke="#f0f0f0" stroke-width="0.22" >2026</text>
<path d="M717.3,953 V970" stroke="#8a8a8a" stroke-width="1"/>
<path d="M1614.8,953 V970" stroke="#8a8a8a" stroke-width="1"/>
<rect x="60.5" y="58.3" width="189.0" height="77.0" fill="#121212" />
<text x="124.3" y="79.1" font-size="14.3" fill="#f2f2f2" textLength="62.1" lengthAdjust="spacingAndGlyphs" xml:space="preserve" stroke="#f2f2f2" stroke-width="0.22" >Last Price</text>
<rect x="68.0" y="83.1" width="12.0" height="11.6" fill="#ffffff" />
<text x="84.5" y="94.9" font-size="14.3" fill="#f2f2f2" textLength="56.4" lengthAdjust="spacingAndGlyphs" xml:space="preserve" stroke="#f2f2f2" stroke-width="0.22" >VIX Index</text>
<text x="152.1" y="94.9" font-size="14.3" fill="#f2f2f2" textLength="26.9" lengthAdjust="spacingAndGlyphs" xml:space="preserve" stroke="#f2f2f2" stroke-width="0.22" >(R1)</text>
<text x="197.2" y="94.9" font-size="14.3" fill="#f2f2f2" textLength="31.5" lengthAdjust="spacingAndGlyphs" xml:space="preserve" stroke="#f2f2f2" stroke-width="0.22" >24.17</text>
<rect x="68.0" y="99.2" width="12.0" height="11.6" fill="#1a78ff" />
<text x="84.5" y="111.0" font-size="14.3" fill="#f2f2f2" textLength="68.0" lengthAdjust="spacingAndGlyphs" xml:space="preserve" stroke="#f2f2f2" stroke-width="0.22" >MOVE Index</text>
<text x="164.0" y="111.0" font-size="14.3" fill="#f2f2f2" textLength="25.8" lengthAdjust="spacingAndGlyphs" xml:space="preserve" stroke="#f2f2f2" stroke-width="0.22" >(L1)</text>
<text x="197.2" y="111.0" font-size="14.3" fill="#f2f2f2" textLength="45.6" lengthAdjust="spacingAndGlyphs" xml:space="preserve" stroke="#f2f2f2" stroke-width="0.22" >81.6800</text>
<rect x="68.0" y="115.1" width="12.0" height="11.6" fill="#ff6432" />
<text x="84.5" y="126.9" font-size="14.3" fill="#f2f2f2" textLength="58.9" lengthAdjust="spacingAndGlyphs" xml:space="preserve" stroke="#f2f2f2" stroke-width="0.22" >OVX Index</text>
<text x="155.0" y="126.9" font-size="14.3" fill="#f2f2f2" textLength="26.5" lengthAdjust="spacingAndGlyphs" xml:space="preserve" stroke="#f2f2f2" stroke-width="0.22" >(L1)</text>
<text x="197.2" y="126.9" font-size="14.3" fill="#f2f2f2" textLength="45.6" lengthAdjust="spacingAndGlyphs" xml:space="preserve" stroke="#f2f2f2" stroke-width="0.22" >96.1400</text>
<rect x="817.0" y="55.0" width="271.0" height="19.5" fill="#121212" />
<rect x="880.5" y="55.0" width="1.0" height="19.5" fill="#0a0a0a" />
<rect x="961.8" y="55.0" width="1.0" height="19.5" fill="#0a0a0a" />
<rect x="1023.9" y="55.0" width="1.0" height="19.5" fill="#0a0a0a" />
<text x="843.5" y="68.7" font-size="12.6" fill="#d8d8d8" textLength="32.5" lengthAdjust="spacingAndGlyphs" xml:space="preserve" stroke="#d8d8d8" stroke-width="0.22" >Track</text>
<text x="908.0" y="68.7" font-size="12.6" fill="#d8d8d8" textLength="50.0" lengthAdjust="spacingAndGlyphs" xml:space="preserve" stroke="#d8d8d8" stroke-width="0.22" >Annotate</text>
<text x="990.0" y="68.7" font-size="12.6" fill="#d8d8d8" textLength="30.0" lengthAdjust="spacingAndGlyphs" xml:space="preserve" stroke="#d8d8d8" stroke-width="0.22" >News</text>
<text x="1052.0" y="68.7" font-size="12.6" fill="#d8d8d8" textLength="32.0" lengthAdjust="spacingAndGlyphs" xml:space="preserve" stroke="#d8d8d8" stroke-width="0.22" >Zoom</text>
<g stroke="#7a7a7a" stroke-width="1" fill="none"><circle cx="829.5" cy="64.8" r="3.2"/><path d="M824,64.8 H835 M829.5,59.3 V70.3"/></g>
<g stroke="#7a7a7a" fill="none"><path d="M890.5,68 L897,61" stroke-width="2"/><path d="M896,69 H899.5" stroke-width="1"/></g>
<g stroke="#7a7a7a" stroke-width="1" fill="none"><path d="M972,62.5 H980.5 M972,65 H980.5 M972,67.5 H980.5 M972,60 H980.5"/></g><rect x="972" y="59.5" width="3.5" height="3" fill="#7a7a7a"/>
<g stroke="#7a7a7a" fill="none"><circle cx="1036.5" cy="63.2" r="3.3" stroke-width="1"/><path d="M1039,66 L1043,70" stroke-width="1.8"/></g>
<rect x="0.0" y="4.0" width="79.0" height="15.5" fill="#ffa028" />
<text x="3.7" y="16.8" font-size="13.8" fill="#1a1000" textLength="73.3" lengthAdjust="spacingAndGlyphs" xml:space="preserve" stroke="#1a1000" stroke-width="0.22" >04/06/2024</text>
<rect x="80.0" y="4.0" width="12.0" height="15.5" fill="#3d3d3d" />
<g stroke="#d0d0d0" stroke-width="1" fill="none"><rect x="82.8" y="9.5" width="6.5" height="5.5"/><path d="M84.3,7.5 V9.5 M87.8,7.5 V9.5"/></g>
<text x="96.8" y="16.0" font-size="13" fill="#f0f0f0" textLength="4.0" lengthAdjust="spacingAndGlyphs" xml:space="preserve" stroke="#f0f0f0" stroke-width="0.22" >-</text>
<rect x="103.8" y="4.0" width="79.0" height="15.5" fill="#ffa028" />
<text x="107.5" y="16.8" font-size="13.8" fill="#1a1000" textLength="73.3" lengthAdjust="spacingAndGlyphs" xml:space="preserve" stroke="#1a1000" stroke-width="0.22" >04/07/2026</text>
<rect x="184.0" y="4.0" width="11.5" height="15.5" fill="#3d3d3d" />
<g stroke="#d0d0d0" stroke-width="1" fill="none"><rect x="186.5" y="9.5" width="6.5" height="5.5"/><path d="M188.0,7.5 V9.5 M191.5,7.5 V9.5"/></g>
<rect x="197.6" y="4.0" width="17.0" height="15.5" fill="#3d3d3d" />
<rect x="216.8" y="4.0" width="15.2" height="15.5" fill="#3d3d3d" />
<path d="M208.3,8 L204.3,12 L208.3,16" stroke="#f0f0f0" stroke-width="1.5" fill="none"/>
<path d="M222.6,8 L226.6,12 L222.6,16" stroke="#f0f0f0" stroke-width="1.5" fill="none"/>
<rect x="237.8" y="4.0" width="73.6" height="15.5" fill="#ffa028" />
<text x="240.0" y="16.8" font-size="13.8" fill="#1a1000" textLength="57.7" lengthAdjust="spacingAndGlyphs" xml:space="preserve" stroke="#1a1000" stroke-width="0.22" >Local CCY</text>
<rect x="312.6" y="4.0" width="11.2" height="15.5" fill="#3d3d3d" />
<path d="M315.8,10.3 H320.8 L318.3,14 Z" fill="#e8e8e8"/>
<rect x="1861.6" y="4.0" width="27.0" height="15.0" fill="#3d3d3d" />
<rect x="1889.4" y="4.0" width="26.4" height="15.0" fill="#383838" />
<g fill="none" stroke="#e6e6e6" stroke-width="1.5"><path d="M1872,16 H1875.5 A3.3,3.3 0 0 0 1875.5,9.4 H1870.5"/></g><path d="M1867.6,9.4 L1871.6,6.4 V12.4 Z" fill="#e6e6e6"/>
<g fill="none" stroke="#6e6e6e" stroke-width="1.5"><path d="M1905.5,16 H1902 A3.3,3.3 0 0 1 1902,9.4 H1907"/></g><path d="M1910,9.4 L1906,6.4 V12.4 Z" fill="#6e6e6e"/>
<text x="1.2" y="33.6" font-size="13.8" fill="#ffa028" textLength="33.6" lengthAdjust="spacingAndGlyphs" xml:space="preserve" stroke="#ffa028" stroke-width="0.22" >Study</text>
<rect x="44.7" y="21.0" width="79.0" height="15.3" fill="#ffa028" />
<text x="46.6" y="33.6" font-size="13.8" fill="#1a1000" textLength="62.8" lengthAdjust="spacingAndGlyphs" xml:space="preserve" stroke="#1a1000" stroke-width="0.22" >Simple MA</text>
<rect x="125.0" y="21.0" width="11.3" height="15.3" fill="#3d3d3d" />
<path d="M128.1,27.3 H133.1 L130.6,31 Z" fill="#e8e8e8"/>
<text x="148.5" y="33.6" font-size="13.8" fill="#ffa028" textLength="39.2" lengthAdjust="spacingAndGlyphs" xml:space="preserve" stroke="#ffa028" stroke-width="0.22" >Period</text>
<rect x="192.6" y="21.0" width="27.6" height="15.3" fill="#ffa028" />
<text x="204.4" y="33.6" font-size="13.8" fill="#1a1000" textLength="13.7" lengthAdjust="spacingAndGlyphs" xml:space="preserve" stroke="#1a1000" stroke-width="0.22" >15</text>
<text x="231.9" y="33.6" font-size="13.8" fill="#ffa028" textLength="36.0" lengthAdjust="spacingAndGlyphs" xml:space="preserve" stroke="#ffa028" stroke-width="0.22" >Offset</text>
<rect x="272.9" y="21.0" width="35.2" height="15.3" fill="#ffa028" />
<text x="299.0" y="33.6" font-size="13.8" fill="#1a1000" textLength="6.4" lengthAdjust="spacingAndGlyphs" xml:space="preserve" stroke="#1a1000" stroke-width="0.22" >0</text>
<g><path d="M322.8,33 L330.5,24.5" stroke="#e4e4e4" stroke-width="3.2"/><path d="M320.3,35.3 L321.6,31.6 L324,34 Z" fill="#e4e4e4"/></g>
<rect x="0.0" y="37.5" width="1916.3" height="16.0" fill="#21201e" />
<rect x="0.0" y="37.5" width="447.5" height="16.0" fill="#1f1f1f" />
<rect x="29.2" y="37.5" width="1.2" height="16.0" fill="#151515" />
<rect x="60.3" y="37.5" width="1.2" height="16.0" fill="#151515" />
<rect x="91.4" y="37.5" width="1.2" height="16.0" fill="#151515" />
<rect x="122.4" y="37.5" width="1.2" height="16.0" fill="#151515" />
<rect x="159.7" y="37.5" width="1.2" height="16.0" fill="#151515" />
<rect x="188.9" y="37.5" width="1.2" height="16.0" fill="#151515" />
<rect x="219.4" y="37.5" width="1.2" height="16.0" fill="#151515" />
<rect x="257.4" y="37.5" width="1.2" height="16.0" fill="#151515" />
<rect x="389.4" y="37.5" width="1.2" height="16.0" fill="#151515" />
<text x="8.7" y="49.7" font-size="12.2" fill="#f2f2f2" textLength="12.4" lengthAdjust="spacingAndGlyphs" xml:space="preserve" stroke="#f2f2f2" stroke-width="0.22" >1D</text>
<text x="38.8" y="49.7" font-size="12.2" fill="#f2f2f2" textLength="12.8" lengthAdjust="spacingAndGlyphs" xml:space="preserve" stroke="#f2f2f2" stroke-width="0.22" >3D</text>
<text x="69.6" y="49.7" font-size="12.2" fill="#f2f2f2" textLength="13.7" lengthAdjust="spacingAndGlyphs" xml:space="preserve" stroke="#f2f2f2" stroke-width="0.22" >1M</text>
<text x="100.0" y="49.7" font-size="12.2" fill="#f2f2f2" textLength="14.3" lengthAdjust="spacingAndGlyphs" xml:space="preserve" stroke="#f2f2f2" stroke-width="0.22" >6M</text>
<text x="131.7" y="49.7" font-size="12.2" fill="#f2f2f2" textLength="19.9" lengthAdjust="spacingAndGlyphs" xml:space="preserve" stroke="#f2f2f2" stroke-width="0.22" >YTD</text>
<text x="169.6" y="49.7" font-size="12.2" fill="#f2f2f2" textLength="11.2" lengthAdjust="spacingAndGlyphs" xml:space="preserve" stroke="#f2f2f2" stroke-width="0.22" >1Y</text>
<text x="198.9" y="49.7" font-size="12.2" fill="#f2f2f2" textLength="11.8" lengthAdjust="spacingAndGlyphs" xml:space="preserve" stroke="#f2f2f2" stroke-width="0.22" >5Y</text>
<text x="228.2" y="49.7" font-size="12.2" fill="#f2f2f2" textLength="21.1" lengthAdjust="spacingAndGlyphs" xml:space="preserve" stroke="#f2f2f2" stroke-width="0.22" >Max</text>
<rect x="258.8" y="37.5" width="52.2" height="16.0" fill="#0d5bd3" />
<text x="263.6" y="49.7" font-size="12.2" fill="#fff" textLength="27.3" lengthAdjust="spacingAndGlyphs" xml:space="preserve" stroke="#fff" stroke-width="0.22" >Daily</text>
<path d="M297,42.3 H306 L301.5,49.7 Z" fill="#fff"/>
<rect x="317.0" y="37.5" width="20.0" height="16.0" fill="#0d5bd3" />
<path d="M320.8,40.6 V50 H333.5" stroke="#8fc0ff" stroke-width="1" fill="none"/><path d="M322,47.5 L325.3,43.8 L328,46 L332.5,42" stroke="#bfe0ff" stroke-width="1.1" fill="none"/>
<g fill="#cfcfcf" stroke="#cfcfcf"><path d="M346,39.5 V51.5 M351,42.5 V51" stroke-width="1"/><rect x="344.6" y="41.5" width="2.8" height="6.5" stroke="none"/><rect x="349.6" y="44.3" width="2.8" height="4.2" stroke="none"/></g>
<path d="M374.8,44 H379.6 L377.2,47.6 Z" fill="#e0e0e0"/>
<text x="404.6" y="49.7" font-size="12.2" fill="#f2f2f2" textLength="29.2" lengthAdjust="spacingAndGlyphs" xml:space="preserve" stroke="#f2f2f2" stroke-width="0.22" >Table</text>
<rect x="1616.0" y="38.5" width="154.5" height="13.7" fill="#ffa028" />
<text x="1617.2" y="50.7" font-size="13.5" fill="#a3680f" textLength="54.2" lengthAdjust="spacingAndGlyphs" xml:space="preserve" stroke="#a3680f" stroke-width="0.22" >Add Data</text>
<rect x="1771.0" y="37.5" width="145.3" height="16.0" fill="#2b2b2b" />
<rect x="1790.0" y="37.5" width="1.0" height="16.0" fill="#1c1c1c" />
<rect x="1870.5" y="37.5" width="1.0" height="16.0" fill="#1c1c1c" />
<rect x="1895.0" y="37.5" width="1.0" height="16.0" fill="#1c1c1c" />
<path d="M1781,41.3 L1777.5,45.5 L1781,49.7 M1785.6,41.3 L1782.1,45.5 L1785.6,49.7" stroke="#f0f0f0" stroke-width="1.4" fill="none"/>
<g><path d="M1798.3,49.2 L1805,41.5" stroke="#e8e8e8" stroke-width="2.6"/><path d="M1796.3,51.4 L1797.3,48.3 L1799.3,50.3 Z" fill="#e8e8e8"/></g>
<text x="1812.5" y="50.2" font-size="12.6" fill="#fff" textLength="53.5" lengthAdjust="spacingAndGlyphs" xml:space="preserve" stroke="#fff" stroke-width="0.22" >Edit Chart</text>
<g><path d="M1876.5,41.5 H1884 M1876.5,43.8 H1882 M1876.5,46 H1880" stroke="#8c8c8c" stroke-width="1"/><path d="M1881.8,48 L1888,41.5" stroke="#f0f0f0" stroke-width="2.2"/><path d="M1879.3,50 L1880.5,47.3 L1882.3,49 Z" fill="#f0f0f0"/><path d="M1884,50 H1889.5" stroke="#f0f0f0" stroke-width="1"/></g>
<g stroke="#f2f2f2" fill="none"><path d="M1908.8,45.5 L1911.8,45.5 M1908.0,47.3 L1910.2,49.5 M1906.2,48.1 L1906.2,51.1 M1904.4,47.3 L1902.2,49.5 M1903.6,45.5 L1900.6,45.5 M1904.4,43.7 L1902.2,41.5 M1906.2,42.9 L1906.2,39.9 M1908.0,43.7 L1910.2,41.5 " stroke-width="1.9"/><circle cx="1906.2" cy="45.5" r="3.1" stroke-width="1.8"/></g>
</svg>
</body></html>
